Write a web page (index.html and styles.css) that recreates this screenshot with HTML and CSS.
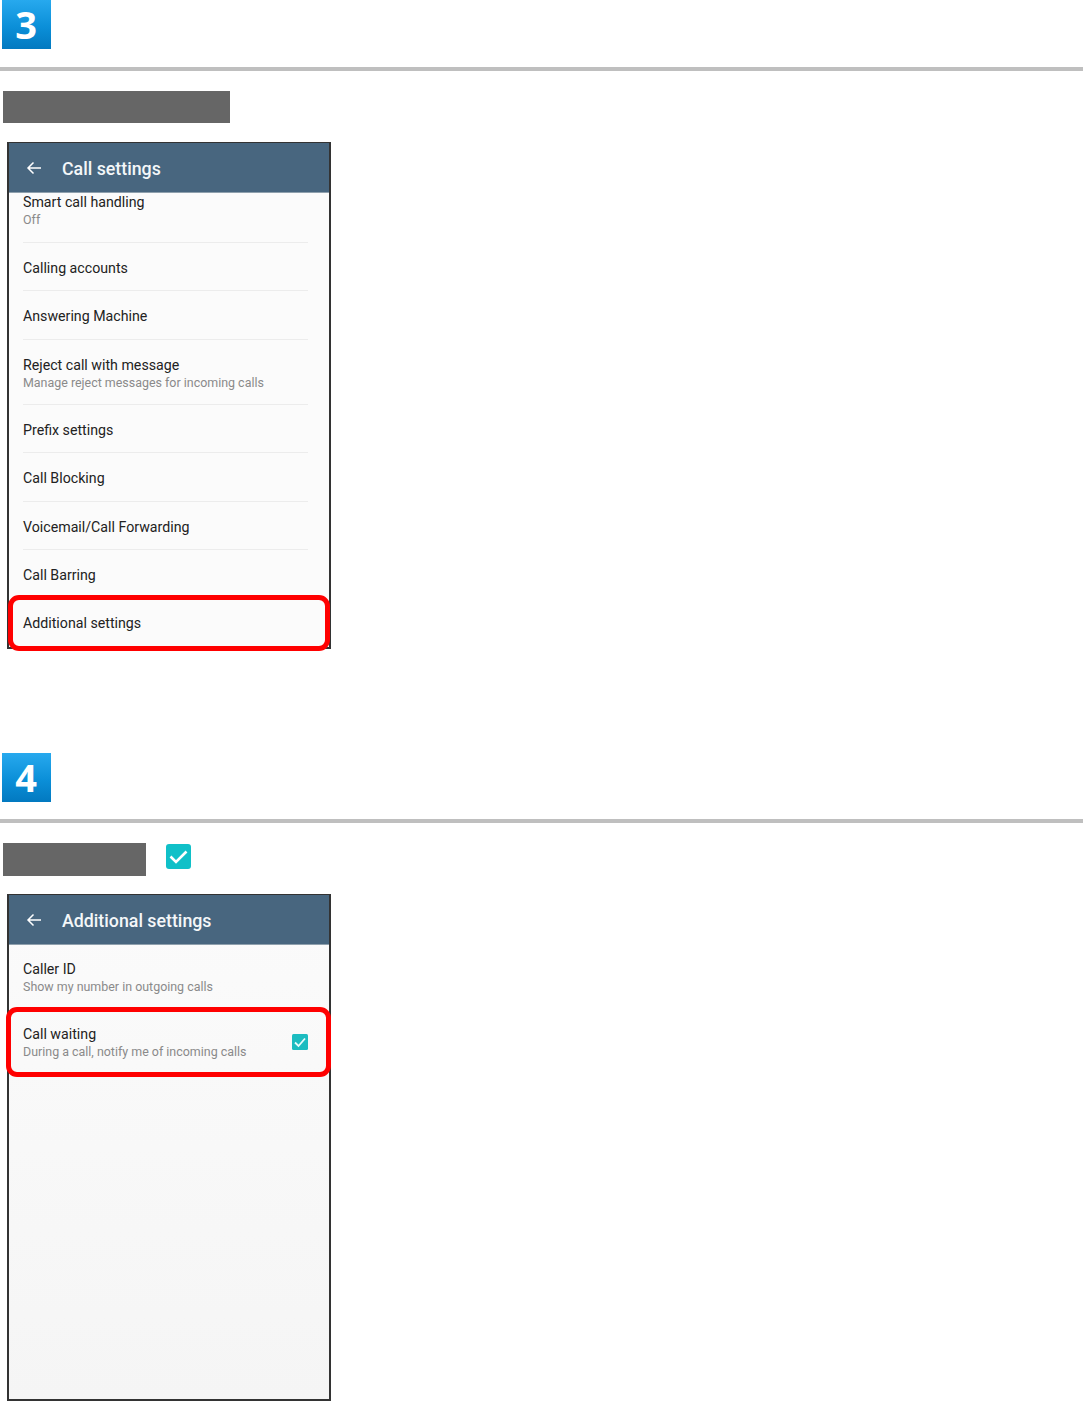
FILE: index.html
```
<!DOCTYPE html>
<html lang="en">
<head>
<meta charset="utf-8">
<title>Call settings steps</title>
<link rel="stylesheet" href="styles.css">
</head>
<body>
<section class="step step-three">
  <div class="badge">3</div>
  <hr class="rule">
  <div class="instruction"><span class="redacted redacted-long"></span></div>
  <div class="phone">
    <header class="appbar">
      <svg class="back" viewBox="0 0 16 14" width="16" height="14"><path d="M15 7H2M7.500 1.500 2 7l5.500 5.500" fill="none" stroke="#fff" stroke-width="1.500"/></svg>
      <span class="appbar-title">Call settings</span>
    </header>
    <ul class="list">
      <li class="row row-first"><span class="title">Smart call handling</span><span class="sub">Off</span></li>
      <li class="row"><span class="title">Calling accounts</span></li>
      <li class="row"><span class="title">Answering Machine</span></li>
      <li class="row row-tall"><span class="title">Reject call with message</span><span class="sub">Manage reject messages for incoming calls</span></li>
      <li class="row"><span class="title">Prefix settings</span></li>
      <li class="row"><span class="title">Call Blocking</span></li>
      <li class="row"><span class="title">Voicemail/Call Forwarding</span></li>
      <li class="row"><span class="title">Call Barring</span></li>
      <li class="row row-last row-end"><span class="title">Additional settings</span></li>
    </ul>
    <div class="highlight highlight-a"></div>
  </div>
</section>
<section class="step step-four">
  <div class="badge">4</div>
  <hr class="rule">
  <div class="instruction">
    <span class="redacted redacted-short"></span>
    <svg class="check-large" viewBox="0 0 25 25" width="25" height="25"><rect width="25" height="25" rx="3" fill="#10c0c8"/><path d="M4.500 12.500 10 18 20.500 7.500" fill="none" stroke="#fff" stroke-width="2.600"/></svg>
  </div>
  <div class="phone">
    <header class="appbar">
      <svg class="back" viewBox="0 0 16 14" width="16" height="14"><path d="M15 7H2M7.500 1.500 2 7l5.500 5.500" fill="none" stroke="#fff" stroke-width="1.500"/></svg>
      <span class="appbar-title">Additional settings</span>
    </header>
    <ul class="list">
      <li class="row row-tall row-caller"><span class="title">Caller ID</span><span class="sub">Show my number in outgoing calls</span></li>
      <li class="row row-tall row-last row-toggle">
        <div class="row-text"><span class="title">Call waiting</span><span class="sub">During a call, notify me of incoming calls</span></div>
        <svg class="check-small" viewBox="0 0 16 16" width="16" height="16"><rect width="16" height="16" rx="1.500" fill="#1cbcc0"/><path d="M3 8.500 6.500 12 13 4.500" fill="none" stroke="#e8fbfb" stroke-width="1.800"/></svg>
      </li>
    </ul>
    <div class="highlight highlight-b"></div>
  </div>
</section>
</body>
</html>
```
FILE: styles.css
```
* { box-sizing: border-box; }
html, body { margin: 0; padding: 0; background: #fff; }
body { font-family: Roboto, "Liberation Sans", sans-serif; height: 1405px; overflow: hidden; }
.step { display: flex; flex-direction: column; align-items: flex-start; }
.step-four { margin-top: 104px; }
.badge {
  width: 49px; height: 49px; margin-left: 2px; padding-right: 1px;
  display: flex; align-items: center; justify-content: center;
  background: linear-gradient(#27a9ee, #0b8fd8 55%, #0279c0);
  color: #fff; font: 700 38px "Open Sans", sans-serif; line-height: 49px;
}
.rule { width: 100%; height: 4px; margin: 18px 0 0; border: 0; background: #bfbfbf; }
.step-four .rule { margin-top: 17px; }
.instruction { display: flex; align-items: flex-start; margin: 20px 0 19px 3px; gap: 20px; }
.redacted { display: block; background: #666; }
.redacted-long { width: 227px; height: 32px; }
.redacted-short { width: 143px; height: 33px; }
.check-large { display: block; margin-top: 1px; }
.step-four .instruction { margin-bottom: 18px; }
.phone {
  position: relative; width: 324px; margin-left: 7px;
  background: #fbfbfb;
  border: 2px solid #333; border-top-width: 1px;
}
.step-three .phone { height: 507px; }
.step-four .phone { height: 507px; background: linear-gradient(#fbfbfb, #f5f5f5); }
.appbar {
  height: 50px; display: flex; align-items: center;
  background: #48667f; color: #fff;
  box-shadow: inset 0 -1px 0 #8fa0ad;
}
.back { margin-left: 17px; }
.appbar-title { margin-left: 20px; font-size: 17.800px; font-weight: 500; color: #f4f7f9; }
.list { list-style: none; margin: 0; padding: 0; }
.row {
  height: 48.500px; margin-left: 14px; width: 285px; padding-top: 3px;
  display: flex; flex-direction: column; justify-content: center;
  border-bottom: 1px solid #ececec;
}
.row-first { height: 49.500px; justify-content: flex-start; padding-top: 0; }
.row-tall { height: 65px; }
.row-last { border-bottom: 0; }
.row-end { padding-top: 1px; }
.row-caller { border-bottom: 0; height: 65px; justify-content: flex-start; padding-top: 15px; }
.row-toggle { flex-direction: row; justify-content: space-between; align-items: center; width: 285px; padding-top: 0; }
.row-text { display: flex; flex-direction: column; }
.title { font-size: 14.200px; line-height: 18px; color: #222; }
.sub { font-size: 12.450px; line-height: 17px; color: #8a8a8a; }
.check-small { margin-bottom: 2px; }
.highlight { position: absolute; border: 5px solid #f00; border-radius: 11px; pointer-events: none; }
.highlight-a { left: -1px; right: -1px; top: 452px; height: 56px; }
.highlight-b { left: -3px; right: -2px; top: 112px; height: 70px; }
```
